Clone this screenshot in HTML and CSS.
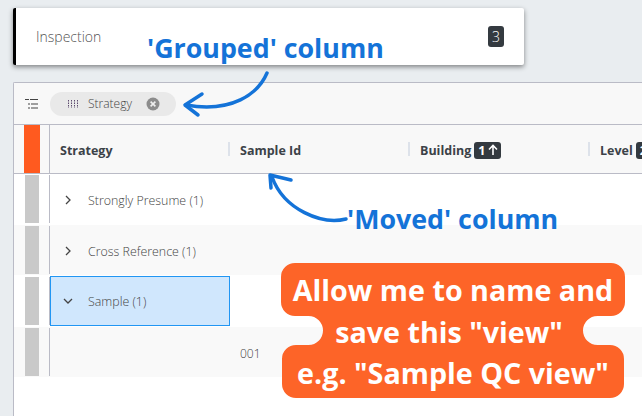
FILE: index.html
```html
<!DOCTYPE html>
<html lang="en">
  <head>
    <meta charset="UTF-8" />
    <title>Inspection grid</title>
    <link rel="stylesheet" href="styles.css">
  </head>
  <body>
    <div class="card">
      <span class="card-title">Inspection</span>
      <span class="count">3</span>
    </div>

    <div class="grid">
      <div class="toolbar">
        <svg class="tree-icon" width="14" height="12" viewBox="0 0 14 12">
          <path d="M0 1.5h4M5 1.5h8M3 6h2M6 6h7M3 10h2M6 10h7" stroke="#444" stroke-width="1" fill="none" />
        </svg>
        <div class="chip">
          <svg class="grip" width="11" height="8" viewBox="0 0 11 8">
            <path d="M.5 0v8M3.5 0v8M6.5 0v8M9.5 0v8" stroke="#5c4a6e" stroke-width="1" stroke-dasharray="1.5 1" fill="none" />
          </svg>
          <span class="chip-label">Strategy</span>
          <svg width="14" height="14" viewBox="0 0 14 14">
            <circle cx="7" cy="7" r="6.5" fill="#8c8c8c" />
            <path d="M4.6 4.6l4.8 4.8M9.4 4.6l-4.8 4.8" stroke="#eee" stroke-width="1.6" />
          </svg>
        </div>
      </div>

      <div class="row header">
        <div class="gutter"><span class="mark mark-head"></span></div>
        <div class="cell">Strategy</div>
        <div class="cell sep">Sample Id</div>
        <div class="cell sep">Building <span class="badge">1 <svg width="12" height="12" viewBox="0 0 12 12"><path d="M6 11V2M2 5.5L6 1.5l4 4" stroke="#fff" stroke-width="1.6" fill="none" /></svg></span></div>
        <div class="cell sep">Level <span class="badge">2</span></div>
      </div>

      <div class="row">
        <div class="gutter"><span class="mark"></span></div>
        <div class="cell group">
          <svg class="chev" width="6" height="10" viewBox="0 0 6 10"><path d="M1 1l4 4-4 4" stroke="#444" stroke-width="1.3" fill="none" /></svg>
          Strongly Presume (1)
        </div>
      </div>
      <div class="row alt">
        <div class="gutter"><span class="mark"></span></div>
        <div class="cell group">
          <svg class="chev" width="6" height="10" viewBox="0 0 6 10"><path d="M1 1l4 4-4 4" stroke="#444" stroke-width="1.3" fill="none" /></svg>
          Cross Reference (1)
        </div>
      </div>
      <div class="row">
        <div class="gutter"><span class="mark"></span></div>
        <div class="cell group selected">
          <svg class="chev open" width="10" height="6" viewBox="0 0 10 6"><path d="M1 1l4 4 4-4" stroke="#444" stroke-width="1.3" fill="none" /></svg>
          Sample (1)
        </div>
      </div>
      <div class="row alt">
        <div class="gutter"><span class="mark"></span></div>
        <div class="cell"></div>
        <div class="cell value">001</div>
      </div>
    </div>

    <div class="note note-grouped">'Grouped' column</div>
    <div class="note note-moved">'Moved' column</div>

    <svg class="arrows" width="642" height="416" viewBox="0 0 642 416">
      <g stroke="#1473d8" fill="none" stroke-linecap="round" stroke-linejoin="round">
        <path d="M267 73C258 94 232 113 186 105" stroke-width="3.5" />
        <path d="M202 94L185 105L198 115" stroke-width="3.5" />
        <path d="M346 219C322 225 284 210 272 177" stroke-width="3.5" />
        <path d="M271 188L270 175L291 180" stroke-width="3.5" />
      </g>
    </svg>

    <div class="callout">
      <svg class="callout-bg" width="344" height="135" viewBox="0 0 344 135">
        <path fill="#fd6428" d="M14 0H330a14 14 0 0 1 14 14V39a14 14 0 0 1-14 14H316.500a14.500 14.500 0 0 0 0 29H329a14 14 0 0 1 14 14V121a14 14 0 0 1-14 14H15a14 14 0 0 1-14-14V96a14 14 0 0 1 14-14H27.500a14.500 14.500 0 0 0 0-29H14a14 14 0 0 1-14-14V14a14 14 0 0 1 14-14Z" />
      </svg>
      <div class="callout-text">Allow me to name and</div>
      <div class="callout-text callout-mid">save this "view"</div>
      <div class="callout-text">e.g. "Sample QC view"</div>
    </div>
  </body>
</html>
```

FILE: styles.css
```css
html, body {
  height: 100%;
}
body {
  margin: 0;
  overflow: hidden;
  position: relative;
  background-color: #e9edf0;
  font-family: "Open Sans", sans-serif;
  color: #555;
  padding: 8px 0 0 13px;
  box-sizing: border-box;
}

/* top card */
.card {
  width: 511px;
  height: 57px;
  box-sizing: border-box;
  background-color: white;
  border-left: 3px solid black;
  border-radius: 2px;
  box-shadow: 0 2px 5px rgba(0,0,0,0.45);
  display: flex;
  align-items: center;
  justify-content: space-between;
  padding: 0 20px 0 20px;
}
.card-title {
  font-size: 14px;
  font-weight: 300;
  color: #555;
}
.count {
  width: 16px;
  height: 21px;
  border-radius: 3px;
  background-color: #343a40;
  color: white;
  font-size: 14px;
  font-weight: 300;
  line-height: 21px;
  text-align: center;
  margin-top: -1px;
}

/* grid */
.grid {
  margin-top: 17px;
  height: 334px;
  background-color: white;
  border-top: 1px solid #babbc6;
  border-left: 1px solid #babbc6;
  border-top-left-radius: 2px;
}
.toolbar {
  height: 41px;
  background-color: #f8f8f8;
  border-bottom: 1px solid #babbc6;
  display: flex;
  align-items: center;
  padding-left: 11px;
}
.tree-icon {
  margin-right: 11px;
}
.chip {
  width: 126px;
  height: 24px;
  box-sizing: border-box;
  border-radius: 12px;
  background-color: #e9e9e9;
  display: flex;
  align-items: center;
  padding: 0 16px 0 18px;
  font-size: 12px;
  font-weight: 300;
  color: #444;
}
.chip-label {
  margin-left: 9px;
  flex: 1;
}

.row {
  display: flex;
  height: 50px;
  margin-bottom: 1px;
}
.alt {
  background-color: #f9f9f9;
}
.header {
  height: 48px;
  margin-bottom: 0;
  background-color: #f8f8f8;
  border-bottom: 1px solid #babbc6;
  font-weight: 700;
  font-size: 12.5px;
  color: #3c4248;
}
.gutter {
  width: 36px;
  flex: none;
  box-sizing: border-box;
  border-right: 1px solid #babbc6;
  padding-left: 11px;
  margin: 1px 0;
  display: flex;
}
.header .gutter {
  margin: 0;
}
.mark {
  width: 14px;
  background-color: #c9c9c9;
}
.mark-head {
  width: 16px;
  margin-left: -1px;
  background-color: #ff5a1f;
}
.cell {
  width: 180px;
  flex: none;
  box-sizing: border-box;
  display: flex;
  align-items: center;
  padding: 2px 0 0 10px;
  white-space: nowrap;
}
.sep {
  position: relative;
}
.sep::before {
  content: "";
  position: absolute;
  left: -2px;
  top: 17px;
  width: 2px;
  height: 14px;
  background-color: #dde2ea;
}
.badge {
  display: inline-flex;
  align-items: center;
  gap: 2px;
  height: 17px;
  padding: 0 2px 0 4px;
  margin-left: 3px;
  border-radius: 3px;
  background-color: #343a40;
  color: white;
}
.group {
  font-size: 12.4px;
  font-weight: 300;
  color: #444;
  padding-left: 15px;
}
.chev {
  margin-right: 17px;
}
.chev.open {
  margin-left: -2px;
  margin-right: 15px;
}
.selected {
  background-color: #d0e7fd;
  border: 1px solid #2196f3;
  padding: 0 0 0 14px;
}
.value {
  font-size: 12px;
  font-weight: 300;
  color: #444;
}

/* annotations, drawn over the page */
.note {
  position: absolute;
  font-weight: 700;
  font-size: 26.8px;
  line-height: 32px;
  color: #1473d8;
  white-space: nowrap;
}
.note-grouped {
  left: 147px;
  top: 32px;
}
.note-moved {
  left: 347px;
  top: 203px;
}
.arrows {
  position: absolute;
  left: 0;
  top: 0;
}
.callout {
  position: absolute;
  left: 281px;
  top: 263px;
  width: 344px;
  height: 135px;
  display: flex;
  flex-direction: column;
  align-items: center;
}
.callout-bg {
  position: absolute;
  left: 0;
  top: 0;
}
.callout-text {
  position: relative;
  font-weight: 700;
  font-size: 28.7px;
  line-height: 41.5px;
  color: white;
  top: 6px;
  white-space: nowrap;
}
.callout-mid {
  margin-right: 8px;
}
```
